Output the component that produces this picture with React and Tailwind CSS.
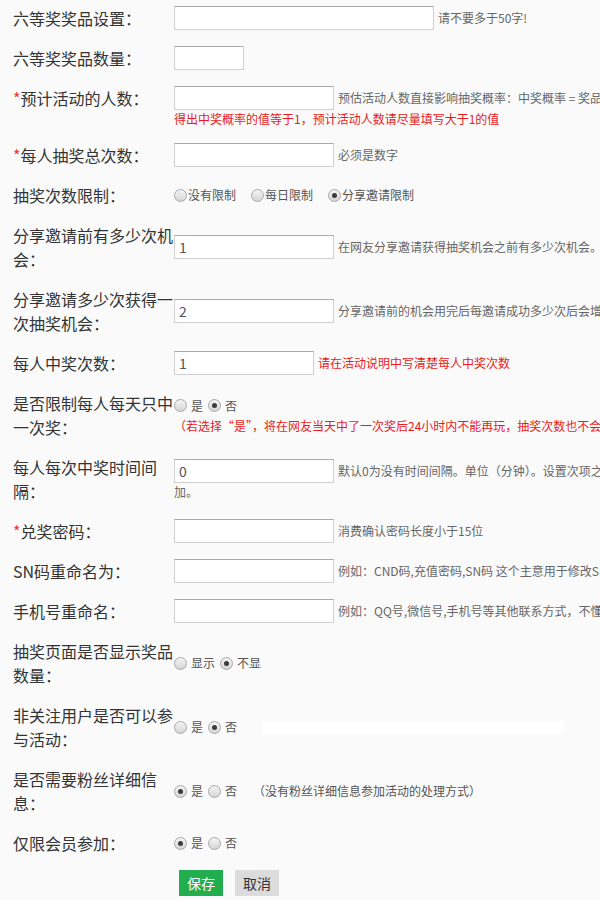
import React from 'react'

const FONT = { fontFamily: '"Noto Sans CJK SC", "Noto Sans", sans-serif' }

function Radio({ checked }) {
  return (
    <span className="inline-flex items-center justify-center w-[13px] h-[13px] shrink-0 rounded-full border border-[#a8a8a8] bg-linear-to-b from-[#f4f4f4] to-[#d6d6d6]">
      {checked && <span className="w-[5px] h-[5px] rounded-full bg-[#3c3c3c]" />}
    </span>
  )
}

function Row({ label, req, top, children }) {
  return (
    <div className={`flex py-2 ${top ? 'items-start' : 'items-center'}`}>
      <div className="w-[161px] shrink-0 text-[16px] leading-6 text-[#333]">
        {req && <span className="text-[#e33]">*</span>}
        {label}
      </div>
      <div className="flex-1 min-w-0">{children}</div>
    </div>
  )
}

function Field({ w = 'w-[160px]', value = '', hint, red }) {
  return (
    <div className="flex items-center whitespace-nowrap">
      <input
        readOnly
        value={value}
        className={`${w} h-6 shrink-0 border border-[#cfcfcf] border-t-[#ababab] bg-white px-1 text-[14px] text-[#555] outline-none`}
      />
      {hint && (
        <span className={`ml-1 text-[12px] ${red ? 'text-[#e81c1c]' : 'text-[#666]'}`}>{hint}</span>
      )}
    </div>
  )
}

function Radios({ items, tight }) {
  return (
    <div className={`flex items-center whitespace-nowrap text-[12px] text-[#555] ${tight ? 'gap-[15px]' : 'gap-[5px]'}`}>
      {items.map(([text, checked]) => (
        <label key={text} className={`flex items-center ${tight ? 'gap-px' : 'gap-[4px]'}`}>
          <Radio checked={checked} />
          <span>{text}</span>
        </label>
      ))}
    </div>
  )
}

export default function App() {
  return (
    <div className="w-[600px] min-h-[900px] overflow-hidden bg-[#fafafa]" style={FONT}>
      <div className="pl-[13px] mt-[-2px]">
        <Row label="六等奖奖品设置：">
          <Field w="w-[260px]" hint="请不要多于50字!" />
        </Row>
        <Row label="六等奖奖品数量：">
          <Field w="w-[70px]" />
        </Row>
        <Row label="预计活动的人数：" req top>
          <Field hint="预估活动人数直接影响抽奖概率：中奖概率 = 奖品总数/(预估活动人数*每人抽奖次数)，如果" />
          <div className="whitespace-nowrap text-[12px] leading-4 text-[#e81c1c] mt-[1px]">
            得出中奖概率的值等于1，预计活动人数请尽量填写大于1的值
          </div>
        </Row>
        <Row label="每人抽奖总次数：" req>
          <Field hint="必须是数字" />
        </Row>
        <Row label="抽奖次数限制：">
          <Radios tight items={[['没有限制', false], ['每日限制', false], ['分享邀请限制', true]]} />
        </Row>
        <Row label="分享邀请前有多少次机会：">
          <Field value="1" hint="在网友分享邀请获得抽奖机会之前有多少次机会。" />
        </Row>
        <Row label="分享邀请多少次获得一次抽奖机会：">
          <Field value="2" hint="分享邀请前的机会用完后每邀请成功多少次后会增加一次抽奖机会。" />
        </Row>
        <Row label="每人中奖次数：">
          <Field w="w-[140px]" value="1" red hint="请在活动说明中写清楚每人中奖次数" />
        </Row>
        <Row label="是否限制每人每天只中一次奖：">
          <Radios items={[['是', false], ['否', true]]} />
          <div className="whitespace-nowrap text-[12px] leading-4 text-[#e81c1c] mt-[3px]">
            （若选择“是”，将在网友当天中了一次奖后24小时内不能再玩，抽奖次数也不会清零）
          </div>
        </Row>
        <Row label="每人每次中奖时间间隔：">
          <Field value="0" hint="默认0为没有时间间隔。单位（分钟）。设置次项之后抽奖次数会相应增" />
          <div className="text-[12px] leading-4 text-[#666] mt-[1px]">加。</div>
        </Row>
        <Row label="兑奖密码：" req>
          <Field hint="消费确认密码长度小于15位" />
        </Row>
        <Row label="SN码重命名为：">
          <Field hint="例如：CND码,充值密码,SN码 这个主意用于修改SN码的名称" />
        </Row>
        <Row label="手机号重命名：">
          <Field hint="例如：QQ号,微信号,手机号等其他联系方式，不懂请不要填写" />
        </Row>
        <Row label="抽奖页面是否显示奖品数量：">
          <Radios items={[['显示', false], ['不显', true]]} />
        </Row>
        <Row label="非关注用户是否可以参与活动：">
          <div className="flex items-center">
            <Radios items={[['是', false], ['否', true]]} />
            <div className="ml-[25px] w-[302px] h-[13px] bg-white" />
          </div>
        </Row>
        <Row label="是否需要粉丝详细信息：">
          <div className="flex items-center">
            <Radios items={[['是', true], ['否', false]]} />
            <span className="ml-[16px] text-[12px] text-[#555] whitespace-nowrap">（没有粉丝详细信息参加活动的处理方式）</span>
          </div>
        </Row>
        <Row label="仅限会员参加：">
          <Radios items={[['是', true], ['否', false]]} />
        </Row>
        <div className="flex gap-3 pl-[166px] pt-[7px]">
          <button className="h-[26px] w-[44px] bg-[#22ad4f] text-[14px] text-white">保存</button>
          <button className="h-[26px] w-[44px] bg-[#dcdcdc] text-[14px] text-[#333]">取消</button>
        </div>
      </div>
    </div>
  )
}
